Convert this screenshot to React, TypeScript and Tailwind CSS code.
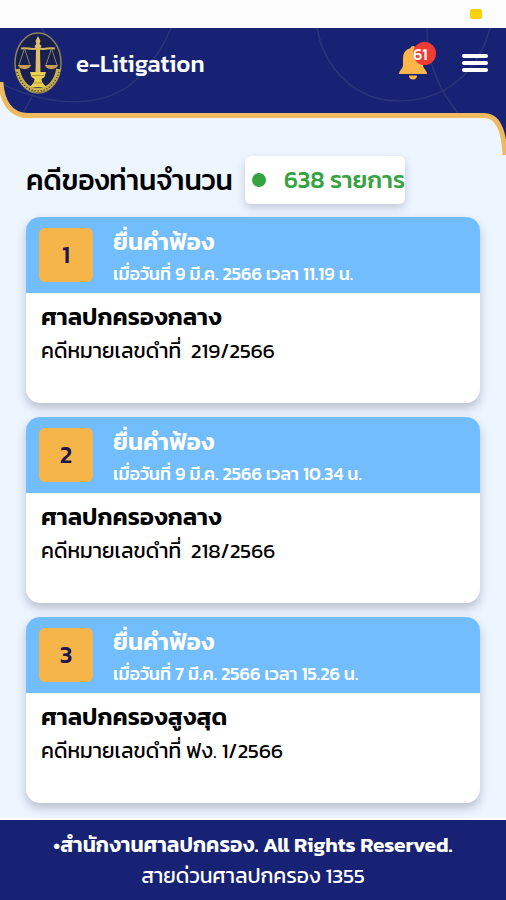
import React, { useState } from 'react';

interface CourtCase {
  id: number;
  title: string;
  filedAt: string;
  court: string;
  caseNo: string;
}

const CASES: CourtCase[] = [
  {
    id: 1,
    title: 'ยื่นคำฟ้อง',
    filedAt: 'เมื่อวันที่ 9 มี.ค. 2566 เวลา 11.19 น.',
    court: 'ศาลปกครองกลาง',
    caseNo: 'คดีหมายเลขดำที่  219/2566',
  },
  {
    id: 2,
    title: 'ยื่นคำฟ้อง',
    filedAt: 'เมื่อวันที่ 9 มี.ค. 2566 เวลา 10.34 น.',
    court: 'ศาลปกครองกลาง',
    caseNo: 'คดีหมายเลขดำที่  218/2566',
  },
  {
    id: 3,
    title: 'ยื่นคำฟ้อง',
    filedAt: 'เมื่อวันที่ 7 มี.ค. 2566 เวลา 15.26 น.',
    court: 'ศาลปกครองสูงสุด',
    caseNo: 'คดีหมายเลขดำที่ ฟง. 1/2566',
  },
];

function CourtLogo() {
  return (
    <svg viewBox="0 0 48 62" className="h-[62px] w-12 shrink-0" fill="none" aria-hidden="true">
      <ellipse cx="24" cy="31" rx="23" ry="30" fill="#17204f" stroke="#8d8558" strokeWidth="1.5" />
      <path d="M3.500 37C6 51 14 58 24 58S42 51 44.500 37" stroke="#c9b04c" strokeWidth="4.500" />
      <path d="M3 40C7 52 14 59 24 59S41 52 45 40" stroke="#3b3820" strokeWidth="1.500" strokeDasharray="1 2" />
      <path d="M24 4l2.500 5-1 3 2 2-1.500 3 .500 24h-5l.500-24-1.500-3 2-2-1-3z" fill="#e3bd68" />
      <path d="M7 16.500c6-1.500 8 1.500 17 0 9 1.500 11-1.500 17 0" stroke="#d9b562" strokeWidth="2" />
      <path d="M10.500 16.500L5 33M10.500 16.500L16 33M37.500 16.500L32 33M37.500 16.500L43 33" stroke="#9c8d5c" strokeWidth="0.900" />
      <path d="M4 33h13c-1 5.500-12 5.500-13 0zM31 33h13c-1 5.500-12 5.500-13 0z" fill="#c89b53" />
      <path d="M16 40h16l-1.500 5-3 2 .500 3 4 5H16l4-5 .500-3-3-2z" fill="#e8cf4f" />
      <path d="M18 43.500h12M20 51h8" stroke="#a08a2d" strokeWidth="0.800" />
    </svg>
  );
}

function BellIcon() {
  return (
    <svg viewBox="0 0 28 34" className="h-[34px] w-7" fill="#fbb549" aria-hidden="true">
      <circle cx="14" cy="2.500" r="2.500" />
      <path d="M14 2C20 2 24 6 24 12.500v6.500c0 4 4 5 4 9H0c0-4 4-5 4-9v-6.500C4 6 8 2 14 2z" />
      <path d="M10 29.500h8a4 4 0 0 1-8 0z" />
    </svg>
  );
}

function Header({ unread }: { unread: number }) {
  const [menuOpen, setMenuOpen] = useState<boolean>(false);

  return (
    <header className="relative shrink-0">
      {/* Status bar */}
      <div className="flex h-7 items-center justify-end bg-[#fcfcfc] pr-6">
        <span className="h-[10px] w-3 rounded-[2px] bg-[#fbd108]" />
      </div>

      {/* Navigation */}
      <div className="relative flex h-[90px] items-start overflow-hidden border-b-[5px] border-[#efb95f] bg-[#172274] pt-1 pr-[18px] pl-[14px]">
        <svg viewBox="0 0 506 85" preserveAspectRatio="xMidYMin slice" className="absolute inset-0 h-full w-full" fill="none" stroke="#2c3579" strokeWidth="1.500" aria-hidden="true">
          <path d="M0 55C55 82 110 80 140 48 154 33 164 18 171 0M33 67L23 85M42 0l4 8" />
          <path d="M317 0c8 43 40 73 82 73 48 0 80-31 91-73M427 0c-1 32 12 62 31 85" />
        </svg>
        <div className="relative flex w-full items-center">
          <CourtLogo />
          <h1 className="ml-[14px] flex-1 pt-[2px] text-[24px] leading-8 font-medium text-white">e-Litigation</h1>
          <button type="button" aria-label="การแจ้งเตือน" className="relative mr-[35px]">
            <BellIcon />
            <span className="absolute -top-1 left-[14px] flex h-[23px] w-[23px] items-center rounded-full bg-[#f23b35] text-[16px] leading-none font-medium text-white">
              {unread}
            </span>
          </button>
          <button
            type="button"
            aria-label="เมนู"
            aria-expanded={menuOpen}
            onClick={() => setMenuOpen(!menuOpen)}
            className="flex w-[26px] flex-col gap-[3px]"
          >
            <span className="h-1 w-full rounded-sm bg-white" />
            <span className="h-1 w-full rounded-sm bg-white" />
            <span className="h-1 w-full rounded-sm bg-white" />
          </button>
        </div>
      </div>

      {/* Curved corners of the gold trim */}
      <svg viewBox="0 0 28 36" className="absolute bottom-0 left-0 h-9 w-7" aria-hidden="true">
        <path d="M0 1C1 20 10 35 26 36H0z" fill="#edf5ff" />
        <path d="M0 1h1C2 19 10 33.500 28 33.500" fill="none" stroke="#efb95f" strokeWidth="5" />
      </svg>
      <svg viewBox="0 0 22 44" className="absolute top-[113px] right-0 z-10 h-11 w-[22px]" aria-hidden="true">
        <path d="M0 0h22v42C21 16 14 3 0 2.500z" fill="#172274" />
        <path d="M0 2.500C13 2.500 20 16 21 42" fill="none" stroke="#efb95f" strokeWidth="5" />
      </svg>
    </header>
  );
}

function CaseCard({ item }: { item: CourtCase }) {
  return (
    <li className="overflow-hidden rounded-[14px] bg-white shadow-[0_5px_10px_rgba(40,50,70,0.28)]">
      <div className="flex h-[76px] items-center gap-5 bg-[#72bdfd] px-[13px]">
        <span className="flex h-[54px] w-[54px] shrink-0 items-center justify-center rounded-md bg-[#f6b549] text-[24px] font-medium text-[#1d1650]">
          {item.id}
        </span>
        <div className="pt-[6px] text-white">
          <h2 className="text-[24px] leading-8 font-semibold">{item.title}</h2>
          <p className="text-[18px] leading-8 font-medium">{item.filedAt}</p>
        </div>
      </div>
      <div className="h-[110px] px-[15px] pt-2 text-black">
        <h3 className="text-[24px] leading-8 font-semibold">{item.court}</h3>
        <p className="text-[21px] leading-9 whitespace-pre">{item.caseNo}</p>
      </div>
    </li>
  );
}

export default function App() {
  return (
    <div className="flex h-screen flex-col overflow-hidden bg-[#edf5ff] font-['Kanit','Prompt','Noto_Sans_Thai','Noto_Sans',sans-serif]">
      <Header unread={61} />

      <main className="min-h-0 flex-1 overflow-hidden px-[26px] pt-[38px]">
        <div className="mb-[13px] flex items-center gap-3">
          <h2 className="text-[28px] leading-10 font-medium whitespace-nowrap text-black">คดีของท่านจำนวน</h2>
          <p className="flex h-12 items-center gap-[18px] rounded-md bg-white pl-[7px] text-[24px] font-medium whitespace-nowrap text-[#36a341] shadow-[0_4px_8px_rgba(40,50,80,0.22)]">
            <span className="h-[14px] w-[14px] rounded-full bg-[#36a341]" />
            638 รายการ
          </p>
        </div>

        <ul className="flex flex-col gap-[14px]">
          {CASES.map((item) => (
            <CaseCard key={item.id} item={item} />
          ))}
        </ul>
      </main>

      <footer className="h-[82px] shrink-0 border-t-2 border-white bg-[#172274] pt-[9px] text-center text-white">
        <p className="text-[21px] leading-8 font-semibold">•สำนักงานศาลปกครอง. All Rights Reserved.</p>
        <p className="text-[21px] leading-[30px]">สายด่วนศาลปกครอง 1355</p>
      </footer>
    </div>
  );
}
